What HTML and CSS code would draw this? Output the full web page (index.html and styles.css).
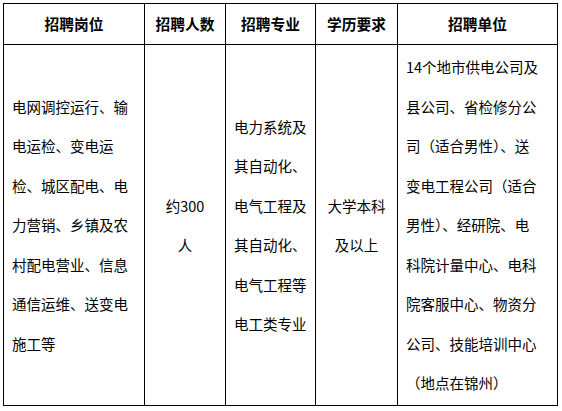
FILE: index.html
```html
<!DOCTYPE html>
<html lang="zh-CN">
<head>
<meta charset="utf-8">
<title>招聘</title>
<link rel="stylesheet" href="styles.css">
</head>
<body>
<div class="wrap">
<table class="grid">
  <colgroup>
    <col class="c1"><col class="c2"><col class="c3"><col class="c4"><col class="c5">
  </colgroup>
  <thead>
    <tr class="head">
      <th>招聘岗位</th>
      <th>招聘人数</th>
      <th>招聘专业</th>
      <th>学历要求</th>
      <th>招聘单位</th>
    </tr>
  </thead>
  <tbody>
    <tr class="body">
      <td class="left">电网调控运行、输<br>电运检、变电运<br>检、城区配电、电<br>力营销、乡镇及农<br>村配电营业、信息<br>通信运维、送变电<br>施工等</td>
      <td class="center">约300<br>人</td>
      <td class="left">电力系统及<br>其自动化、<br>电气工程及<br>其自动化、<br>电气工程等<br>电工类专业</td>
      <td class="center">大学本科<br>及以上</td>
      <td class="left">14个地市供电公司及<br>县公司、省检修分公<br>司（适合男性）、送<br>变电工程公司（适合<br>男性）、经研院、电<br>科院计量中心、电科<br>院客服中心、物资分<br>公司、技能培训中心<br>（地点在锦州）</td>
    </tr>
  </tbody>
</table>
</div>
</body>
</html>
```
FILE: styles.css
```css
html, body {
  margin: 0;
  padding: 0;
  background: #fff;
}
.wrap {
  padding: 3px 0 0 3px;
}
.grid {
  border-collapse: collapse;
  table-layout: fixed;
  width: 554px;
  font-family: "Noto Sans CJK SC", "Noto Sans", sans-serif;
  color: #000;
}
.c1 { width: 141px; }
.c2 { width: 81px; }
.c3 { width: 90px; }
.c4 { width: 82px; }
.c5 { width: 160px; }
.grid th, .grid td {
  border: 1px solid #000;
  padding: 0 8px;
  white-space: nowrap;
  overflow: hidden;
}
.head th {
  height: 40px;
  font-size: 14.7px;
  font-weight: bold;
  text-align: center;
  vertical-align: middle;
  line-height: 20px;
}
.body td {
  height: 360px;
  font-size: 14.5px;
  line-height: 39.5px;
  vertical-align: middle;
}
.left { text-align: left; }
.center { text-align: center; }
```
